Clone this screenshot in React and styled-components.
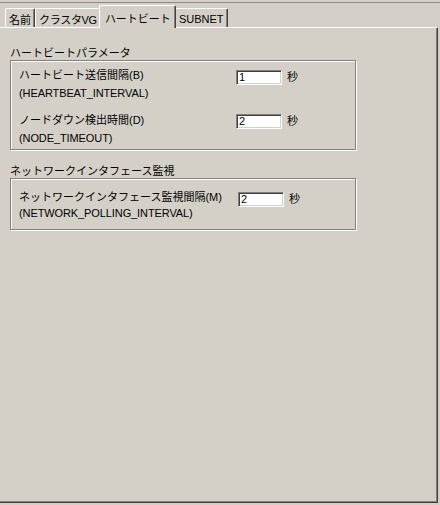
import React from "react";
import styled, { createGlobalStyle } from "styled-components";

const Global = createGlobalStyle`
  html, body { margin: 0; padding: 0; background: #d4d0c8; }
  body { font-family: "Liberation Sans", "Noto Sans CJK JP", sans-serif; font-size: 11px; color: #000; }
  * { box-sizing: border-box; }
`;

const Frame = styled.div`
  width: 440px;
  height: 505px;
  padding: 2px 2px 2px 0;
  display: flex;
  flex-direction: column;
  background: #d4d0c8;
`;

const Window = styled.div`
  flex: 1;
  display: flex;
  flex-direction: column;
  border-top: 1px solid #8a8a8a;
  margin-right: -2px;
  padding-right: 2px;
`;

const TabStrip = styled.div`
  height: 24px;
  display: flex;
  align-items: flex-end;
  padding-left: 5px;
`;

const Tab = styled.div`
  position: relative;
  z-index: ${(p) => (p.$active ? 2 : 1)};
  height: ${(p) => (p.$active ? "23px" : "19px")};
  margin: ${(p) => (p.$active ? "0 -1px -1px -2px" : "0")};
  padding: ${(p) => (p.$active ? "2px 4px 0 5px" : "1px 3px 0 3px")};
  display: flex;
  align-items: center;
  background: #d4d0c8;
  border-top: 1px solid #fff;
  border-left: 1px solid #fff;
  border-right: 1px solid #404040;
  box-shadow: inset -1px 0 0 #808080;
  border-top-left-radius: 2px;
  border-top-right-radius: 2px;
  font-size: 11px;
  letter-spacing: ${(p) => (p.$tight ? "-0.3px" : "0")};
  white-space: nowrap;
  color: #000;
`;

const Panel = styled.div`
  flex: 1;
  border-top: 1px solid #fff;
  border-right: 1px solid #404040;
  border-bottom: 1px solid #404040;
  box-shadow: inset -1px -1px 0 #808080;
  padding: 18px 0 0 10px;
`;

const Section = styled.section`
  margin-top: ${(p) => p.$mt || 0}px;
`;

const GroupTitle = styled.div`
  height: 14px;
  line-height: 14px;
  font-size: 11px;
  white-space: nowrap;
`;

const GroupBox = styled.div`
  width: 346px;
  border: 1px solid #808080;
  box-shadow: inset 1px 1px 0 #fff, 1px 1px 0 #fff;
  padding: ${(p) => p.$pad};
  display: flex;
  flex-direction: column;
  gap: 9px;
`;

const Row = styled.div`
  display: flex;
  align-items: flex-start;
  line-height: ${(p) => p.$lh}px;
`;

const Label = styled.div`
  width: ${(p) => p.$w}px;
  display: flex;
  flex-direction: column;
  font-size: 11px;
  white-space: nowrap;
`;

const Code = styled.span`
  font-size: 11px;
  letter-spacing: -0.1px;
`;

const Field = styled.div`
  margin-top: ${(p) => p.$mt}px;
  width: 46px;
  height: 15px;
  border-top: 1px solid #808080;
  border-left: 1px solid #808080;
  border-right: 1px solid #fff;
  border-bottom: 1px solid #fff;
  box-shadow: inset 1px 1px 0 #404040, inset -1px -1px 0 #d4d0c8;
  background: #fff;
  font-size: 11px;
  line-height: 13px;
  padding-left: 2px;
`;

const Unit = styled.div`
  margin-left: 5px;
  margin-top: ${(p) => p.$mt}px;
  font-size: 11px;
  line-height: 15px;
`;

function SettingRow({ title, code, value, lw, lh, fmt }) {
  return (
    <Row $lh={lh}>
      <Label $w={lw}>
        <span>{title}</span>
        <Code>{code}</Code>
      </Label>
      <Field $mt={fmt}>{value}</Field>
      <Unit $mt={fmt}>秒</Unit>
    </Row>
  );
}

export default function App() {
  return (
    <>
      <Global />
      <Frame>
        <Window>
          <TabStrip>
            <Tab>名前</Tab>
            <Tab $tight>クラスタVG</Tab>
            <Tab $active>ハートビート</Tab>
            <Tab>SUBNET</Tab>
          </TabStrip>
          <Panel>
            <Section>
              <GroupTitle>ハートビートパラメータ</GroupTitle>
              <GroupBox $pad="5px 0 2px 8px">
                <SettingRow
                  title="ハートビート送信間隔(B)"
                  code="(HEARTBEAT_INTERVAL)"
                  value="1"
                  lw={217}
                  lh={18}
                  fmt={4}
                />
                <SettingRow
                  title="ノードダウン検出時間(D)"
                  code="(NODE_TIMEOUT)"
                  value="2"
                  lw={217}
                  lh={18}
                  fmt={3}
                />
              </GroupBox>
            </Section>
            <Section $mt={14}>
              <GroupTitle>ネットワークインタフェース監視</GroupTitle>
              <GroupBox $pad="10px 0 8px 8px">
                <SettingRow
                  title="ネットワークインタフェース監視間隔(M)"
                  code="(NETWORK_POLLING_INTERVAL)"
                  value="2"
                  lw={219}
                  lh={16}
                  fmt={3}
                />
              </GroupBox>
            </Section>
          </Panel>
        </Window>
      </Frame>
    </>
  );
}
